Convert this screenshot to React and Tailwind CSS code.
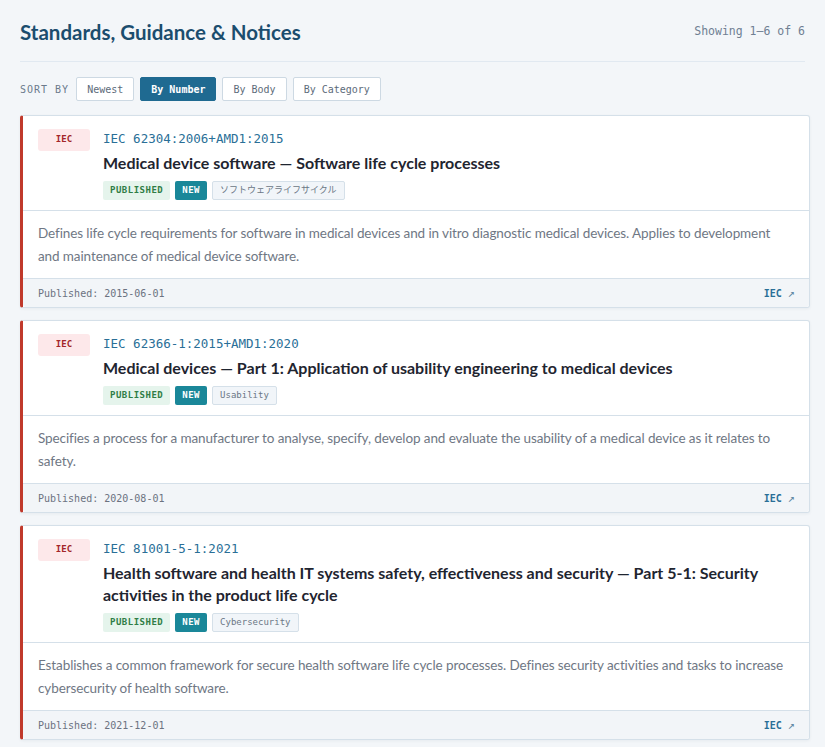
const ITEMS = [
    {
        body: "IEC",
        number: "IEC 62304:2006+AMD1:2015",
        title: "Medical device software — Software life cycle processes",
        tag: "ソフトウェアライフサイクル",
        desc: "Defines life cycle requirements for software in medical devices and in vitro diagnostic medical devices. Applies to development and maintenance of medical device software.",
        date: "2015-06-01",
    },
    {
        body: "IEC",
        number: "IEC 62366-1:2015+AMD1:2020",
        title: "Medical devices — Part 1: Application of usability engineering to medical devices",
        tag: "Usability",
        desc: "Specifies a process for a manufacturer to analyse, specify, develop and evaluate the usability of a medical device as it relates to safety.",
        date: "2020-08-01",
    },
    {
        body: "IEC",
        number: "IEC 81001-5-1:2021",
        title: "Health software and health IT systems safety, effectiveness and security — Part 5-1: Security activities in the product life cycle",
        tag: "Cybersecurity",
        desc: "Establishes a common framework for secure health software life cycle processes. Defines security activities and tasks to increase cybersecurity of health software.",
        date: "2021-12-01",
    },
];

const SORTS = ["Newest", "By Number", "By Body", "By Category"];

const sans = "font-['Lato','Noto_Sans',sans-serif]";
const mono = "font-['DejaVu_Sans_Mono','Noto_Sans_CJK_JP',monospace]";

function Card({ item }) {
    return (
        <div className="bg-white border border-[#d5e0e9] border-l-[3px] border-l-[#c0392b] rounded-[3px] shadow-[0_1px_3px_rgba(30,60,90,0.06)]">
            {/* Header */}
            <div className="flex gap-[13px] pl-[15px] pr-[14px] pt-[13px] pb-[10px] border-b border-[#d5e0e9]">
                <div className={`${mono} shrink-0 w-[52px] h-[22px] flex items-center justify-center rounded-[3px] bg-[#fde8ea] text-[#a3262a] text-[9px] font-bold`}>
                    {item.body}
                </div>
                <div className="min-w-0">
                    <p className={`${mono} text-[12.5px] leading-[20px] text-[#2a6f97]`}>{item.number}</p>
                    <h3 className={`${sans} text-[16px] leading-[22px] font-bold text-[#1f2530] mt-[3px]`}>{item.title}</h3>
                    <div className={`${mono} flex items-center gap-[5px] mt-[7px]`}>
                        <span className="h-[19px] px-[7px] flex items-center rounded-[2px] bg-[#e5f4ec] text-[#2f7d46] text-[9px] leading-none font-bold tracking-[0.5px]">PUBLISHED</span>
                        <span className="h-[19px] px-[7px] flex items-center rounded-[2px] bg-[#1a8799] text-white text-[9px] leading-none font-bold tracking-[0.5px]">NEW</span>
                        <span className="h-[19px] px-[7px] flex items-center rounded-[2px] bg-[#f1f5f9] border border-[#d5e0e9] text-[#6b7785] text-[9px] leading-none">{item.tag}</span>
                    </div>
                </div>
            </div>

            {/* Description */}
            <p className={`${sans} pl-[15px] pr-[14px] pt-[11px] pb-[10px] text-[13.5px] tracking-[-0.1px] leading-[23px] text-[#6f7784]`}>{item.desc}</p>

            {/* Footer */}
            <div className={`${mono} flex items-center justify-between h-[29px] pl-[15px] pr-[14px] bg-[#f2f5f8] border-t border-[#d5e0e9] rounded-b-[3px]`}>
                <span className="text-[10px] text-[#6b7280]">Published: {item.date}</span>
                <span className="text-[10px] font-bold text-[#2a6f97]">
                    {item.body} <span className="font-normal text-[12px] text-[#5f87a3]">↗</span>
                </span>
            </div>
        </div>
    );
}

export default function App() {
    return (
        <div className="min-h-screen bg-[#f3f6f9] pl-5 pr-[15px] pt-[18px] pb-4">
            <div className="pr-[5px]">
                <div className="flex items-center justify-between pb-[15px] border-b border-[#e1e9f1]">
                    <h1 className={`${sans} text-[20.5px] leading-[28px] font-bold text-[#1b4d6e]`}>
                        Standards, Guidance &amp; Notices
                    </h1>
                    <span className={`${mono} text-[11.5px] text-[#6f7f93]`}>Showing 1–6 of 6</span>
                </div>
            </div>

            {/* Sort bar */}
            <div className={`${mono} flex items-center gap-[6px] mt-[15px] mb-[14px]`}>
                <span className="text-[10px] tracking-[1px] text-[#6b7a8c] mr-[1px]">SORT BY</span>
                {SORTS.map((s) => (
                    <button
                        key={s}
                        className={`h-6 px-[10px] text-[10px] rounded-[2px] border ${s === "By Number"
                            ? "bg-[#1f6a91] border-[#1f6a91] text-white font-bold"
                            : "bg-white border-[#cdd9e3] text-[#5d6b7a]"
                            }`}
                    >
                        {s}
                    </button>
                ))}
            </div>

            <div className="flex flex-col gap-3">
                {ITEMS.map((item) => (
                    <Card key={item.number} item={item} />
                ))}
            </div>
        </div>
    );
}
